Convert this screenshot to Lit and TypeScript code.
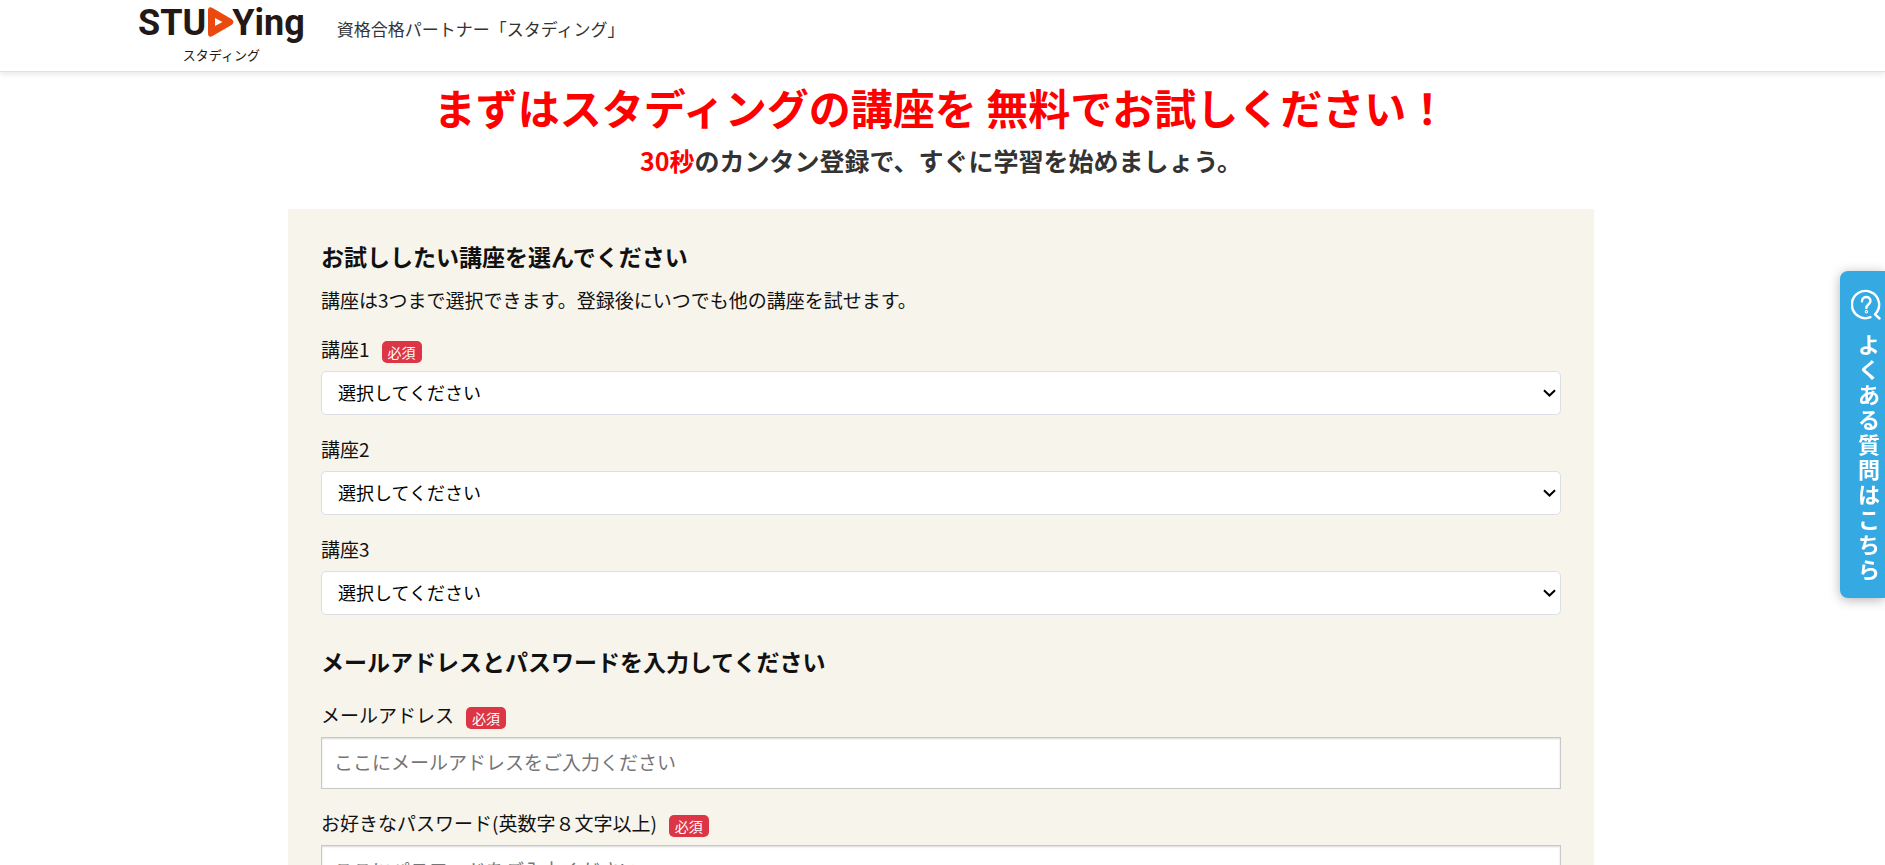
import { LitElement, html, css } from "lit";
import { customElement, property } from "lit/decorators.js";

const fieldStyles = css`
  :host { display: block; }
  .label { display: flex; gap: 12px; height: 28px; margin-bottom: 8px; line-height: 28px; }
  .badge {
    align-self: flex-end; padding: 0 6px; border-radius: 5px; background: #dc3545; color: #fff;
    font-size: 14px; line-height: 22px;
  }
`;

@customElement("course-select")
class CourseSelect extends LitElement {
  @property({ type: Number }) number = 1;
  @property({ type: Boolean }) required = false;

  static styles = [fieldStyles, css`
    .select {
      display: block; box-sizing: border-box; width: 100%; height: 44px; margin: 0;
      padding: 0 24px 2px 16px; border: 1px solid #dcdfe6; border-radius: 5px; appearance: none;
      background: #fff url("data:image/svg+xml,%3Csvg xmlns='http://www.w3.org/2000/svg' width='13' height='8' viewBox='0 0 13 8'%3E%3Cpath d='M1 1.200L6.500 6.500L12 1.200' fill='none' stroke='%23000' stroke-width='2'/%3E%3C/svg%3E") no-repeat right 4px center;
      color: #000; font-family: inherit; font-size: 18px;
    }
  `];

  render() {
    return html`
      <div class="label">
        <label for="course">講座${this.number}</label>
        ${this.required ? html`<span class="badge">必須</span>` : null}
      </div>
      <select class="select" id="course" name="course${this.number}">
        <option>選択してください</option>
      </select>
    `;
  }
}

@customElement("text-field")
class TextField extends LitElement {
  @property() label = "";
  @property() type = "text";
  @property() placeholder = "";

  static styles = [fieldStyles, css`
    .input {
      display: block; box-sizing: border-box; width: 100%; height: 52px; margin: 0;
      padding: 0 12px 4px; border: 1px solid #c8c8c8; border-radius: 0;
      background: #fff; box-shadow: inset 0 1px 2px rgba(0, 0, 0, 0.15);
      font-family: inherit; font-size: 19px;
    }
    .input::placeholder { color: #757575; }
  `];

  render() {
    return html`
      <div class="label">
        <label for="field">${this.label}</label>
        <span class="badge">必須</span>
      </div>
      <input class="input" id="field" type=${this.type} placeholder=${this.placeholder} />
    `;
  }
}

@customElement("app-root")
class AppRoot extends LitElement {
  static styles = css`
    :host {
      display: block; height: 100vh; overflow: hidden; background: #fff; color: #111;
      font-family: "Noto Sans CJK JP", sans-serif; font-size: 19px;
    }
    .header {
      display: flex; align-items: flex-start; height: 71px; padding-left: 138px; gap: 32px;
      border-bottom: 1px solid #dfe2e2; box-shadow: 0 2px 6px rgba(0, 0, 0, 0.1);
    }
    .logo {
      display: flex; flex-direction: column; align-items: center;
      color: #231815; text-decoration: none;
    }
    .wordmark {
      display: flex; align-items: center; height: 46px;
      font-family: Roboto, sans-serif; font-weight: 700; font-size: 36px; line-height: 46px;
    }
    .play { margin: 0 -2px 2px 2px; }
    .kana { font-size: 13px; line-height: 18px; }
    .tagline { margin: 0; padding-top: 17px; color: #333; font-size: 17px; line-height: 24px; }
    .main { padding: 10px 3px 0 0; }
    .title, .lead { margin: 0; text-align: center; font-weight: 700; }
    .title { color: #f00; font-size: 42px; line-height: 50px; }
    .lead { margin-top: 13px; color: #333; font-size: 25px; line-height: 30px; }
    .accent { color: #f00; }
    .panel {
      display: flex; flex-direction: column; gap: 20px; box-sizing: border-box;
      width: 100%; max-width: 1306px; margin: 34px auto 0; padding: 32px 33px; background: #f7f4ec;
    }
    .intro { display: flex; flex-direction: column; gap: 14px; }
    .heading { margin: 0; font-size: 23px; line-height: 30px; }
    .note { margin: 0; line-height: 30px; }
    .second { padding: 11px 0 5px; }
    .faq {
      position: fixed; top: 271px; right: 0; box-sizing: border-box; width: 45px; height: 327px;
      display: flex; flex-direction: column; align-items: center; gap: 10px;
      padding: 18px 0 0 7px; border-radius: 8px 0 0 8px; background: #34a9e2; color: #fff;
      box-shadow: 0 2px 12px rgba(0, 0, 0, 0.3); text-decoration: none;
    }
    .faq-text {
      width: 22px; padding-left: 6px; font-size: 22px; line-height: 25px; font-weight: 700;
      word-break: break-all; line-break: anywhere;
    }
  `;

  render() {
    return html`
      <header class="header">
        <a class="logo" href="#">
          <span class="wordmark">
            <span>STU</span>
            <svg class="play" width="26" height="30" viewBox="0 0 26 30" aria-hidden="true">
              <path fill="#ea4a10" d="M0 4Q0-1.500 5 1.200L23.500 12Q27.500 15 23.500 18L5 28.800Q0 31.500 0 26Z" />
              <path fill="#fff" d="M7 11L14.500 15L7 19Z" />
            </svg>
            <span>Ying</span>
          </span>
          <span class="kana">スタディング</span>
        </a>
        <p class="tagline">資格合格パートナー「スタディング」</p>
      </header>
      <main class="main">
        <h1 class="title">まずはスタディングの講座を 無料でお試しください！</h1>
        <p class="lead"><span class="accent">30秒</span>のカンタン登録で、すぐに学習を始めましょう。</p>
        <form class="panel">
          <div class="intro">
            <h2 class="heading">お試ししたい講座を選んでください</h2>
            <p class="note">講座は3つまで選択できます。登録後にいつでも他の講座を試せます。</p>
          </div>
          <course-select .number=${1} required></course-select>
          <course-select .number=${2}></course-select>
          <course-select .number=${3}></course-select>
          <h2 class="heading second">メールアドレスとパスワードを入力してください</h2>
          <text-field label="メールアドレス" type="email" placeholder="ここにメールアドレスをご入力ください"></text-field>
          <text-field label="お好きなパスワード(英数字８文字以上)" type="password" placeholder="ここにパスワードをご入力ください"></text-field>
        </form>
      </main>
      <a class="faq" href="#">
        <svg width="30" height="32" viewBox="0 0 30 32" fill="none" stroke="#fff" stroke-width="2.400" stroke-linecap="round" stroke-linejoin="round" aria-hidden="true">
          <path d="M19.500 28.200A13.600 13.600 0 1 1 24 25.300L28.500 29.500" />
          <path d="M11 12.300C11 6.700 19.500 6.700 19.500 12C19.500 15.300 15.400 15.200 15.400 19" />
          <circle cx="15.400" cy="22.800" r="0.500" />
        </svg>
        <span class="faq-text">よくある質問はこちら</span>
      </a>
    `;
  }
}
